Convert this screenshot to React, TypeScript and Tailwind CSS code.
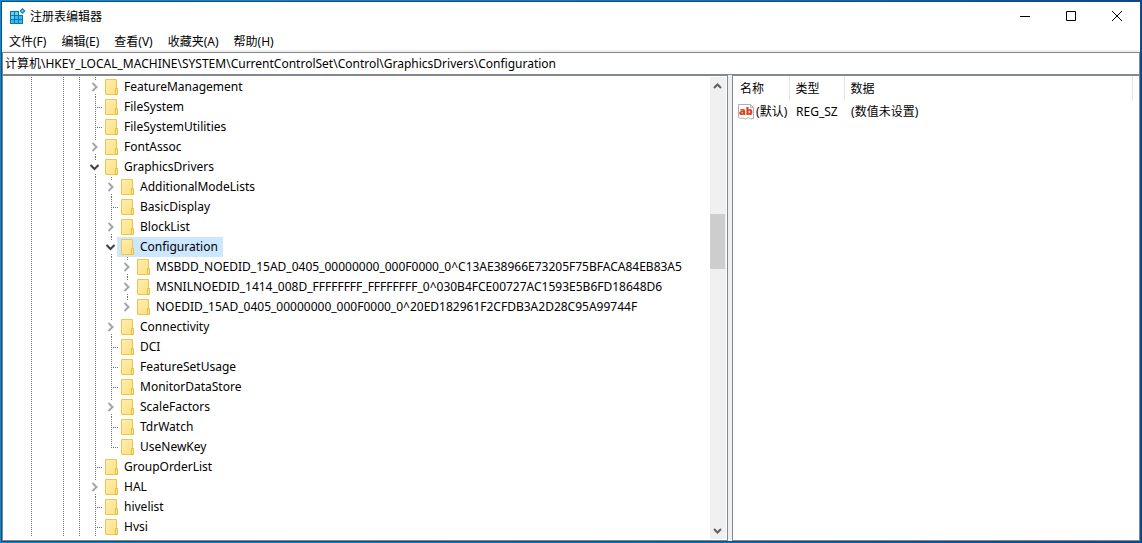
interface TreeKey {
  name: string;
  guides: boolean[];
  state: "leaf" | "closed" | "open";
  last?: boolean;
  selected?: boolean;
}

const BASE = [true, false, true, true];
const SUB = [...BASE, true];
const DEEP = [...SUB, true];

const keys: TreeKey[] = [
  { name: "FeatureManagement", guides: BASE, state: "closed" },
  { name: "FileSystem", guides: BASE, state: "leaf" },
  { name: "FileSystemUtilities", guides: BASE, state: "leaf" },
  { name: "FontAssoc", guides: BASE, state: "closed" },
  { name: "GraphicsDrivers", guides: BASE, state: "open" },
  { name: "AdditionalModeLists", guides: SUB, state: "closed" },
  { name: "BasicDisplay", guides: SUB, state: "leaf" },
  { name: "BlockList", guides: SUB, state: "closed" },
  { name: "Configuration", guides: SUB, state: "open", selected: true },
  { name: "MSBDD_NOEDID_15AD_0405_00000000_000F0000_0^C13AE38966E73205F75BFACA84EB83A5", guides: DEEP, state: "closed" },
  { name: "MSNILNOEDID_1414_008D_FFFFFFFF_FFFFFFFF_0^030B4FCE00727AC1593E5B6FD18648D6", guides: DEEP, state: "closed" },
  { name: "NOEDID_15AD_0405_00000000_000F0000_0^20ED182961F2CFDB3A2D28C95A99744F", guides: DEEP, state: "closed", last: true },
  { name: "Connectivity", guides: SUB, state: "closed" },
  { name: "DCI", guides: SUB, state: "leaf" },
  { name: "FeatureSetUsage", guides: SUB, state: "leaf" },
  { name: "MonitorDataStore", guides: SUB, state: "leaf" },
  { name: "ScaleFactors", guides: SUB, state: "closed" },
  { name: "TdrWatch", guides: SUB, state: "leaf" },
  { name: "UseNewKey", guides: SUB, state: "leaf", last: true },
  { name: "GroupOrderList", guides: BASE, state: "leaf" },
  { name: "HAL", guides: BASE, state: "closed" },
  { name: "hivelist", guides: BASE, state: "leaf" },
  { name: "Hvsi", guides: BASE, state: "leaf" },
];

const menus = ["文件(F)", "编辑(E)", "查看(V)", "收藏夹(A)", "帮助(H)"];

function RegeditIcon() {
  return (
    <svg width="16" height="16" viewBox="0 0 16 16" aria-hidden="true">
      <path d="M0 3h9v4h4v9H0z" fill="#0b76ad" />
      <path d="M1 4h3v3H1zM5 4h3v3H5zM1 8h3v3H1z" fill="#62d2fb" />
      <path d="M5 8h3v3H5zM9 8h3v3H9zM1 12h3v3H1zM5 12h3v3H5zM9 12h3v3H9z" fill="#35bdf2" />
      <path d="M12.500 0l3 3-3 3-3-3z" fill="#0b76ad" />
      <path d="M12.500 1.500L14 3l-1.500 1.500L11 3z" fill="#62d2fb" />
    </svg>
  );
}

function FolderIcon() {
  return (
    <svg width="13" height="16" viewBox="0 0 13 16" className="shrink-0" aria-hidden="true">
      <defs>
        <linearGradient id="folder" x1="0" y1="0" x2="1" y2="1">
          <stop offset="0" stopColor="#ffeeb0" />
          <stop offset="1" stopColor="#ffdf80" />
        </linearGradient>
      </defs>
      <path d="M.5.5h11v15H.5z" fill="url(#folder)" stroke="#ebc84c" />
      <path d="M10.500 9.500h2v6h-2z" fill="#ffe695" stroke="#e6bf40" />
    </svg>
  );
}

function StringIcon() {
  return (
    <svg width="16" height="16" viewBox="0 0 16 16" className="shrink-0" aria-hidden="true">
      <path d="M.5.5h12l3 3v11l-3 .5-2-1.500-3 1.500-3-1-2 .5-2-1z" fill="#fff" stroke="#b0b0b0" />
      <path d="M12.500.5v3h3" fill="none" stroke="#b0b0b0" />
      <text x="1" y="11" fontSize="11" fontWeight="800" fill="#d8431c" fontFamily="Open Sans, sans-serif">ab</text>
    </svg>
  );
}

function Chevron({ open }: { open: boolean }) {
  return (
    <svg width="11" height="10" viewBox="0 0 11 10" fill="none" strokeWidth="2" aria-hidden="true">
      {open ? (
        <path d="M1.500 3l4 4 4-4" stroke="#404040" />
      ) : (
        <path d="M3.500 1l4 4-4 4" stroke="#a6a6a6" />
      )}
    </svg>
  );
}

function Guide() {
  return <span className="w-px h-full bg-[repeating-linear-gradient(to_bottom,#707070_0_1px,transparent_1px_2px)]" />;
}

function TreeRow({ item }: { item: TreeKey }) {
  return (
    <li className="flex h-5" role="treeitem" aria-selected={!!item.selected}>
      {item.guides.map((line, i) => (
        <span key={i} className="w-4 shrink-0 flex justify-center pr-px">
          {line && <Guide />}
        </span>
      ))}
      {item.state === "leaf" ? (
        <span className="w-[13px] shrink-0 flex pl-[7px]">
          <span className={item.last ? "h-[11px] flex" : "h-5 flex"}>
            <Guide />
          </span>
          <span className="mt-2.5 h-px w-1.5 shrink-0 bg-[repeating-linear-gradient(to_right,transparent_0_1px,#707070_1px_2px)]" />
        </span>
      ) : (
        <span className="w-[13px] shrink-0 flex flex-col items-center">
          <span className="h-[3px] flex ml-[2px]"><Guide /></span>
          <button className="h-3.5 flex items-center" aria-label={item.name}>
            <Chevron open={item.state === "open"} />
          </button>
          {!item.last && <span className="h-[3px] flex ml-[2px]"><Guide /></span>}
        </span>
      )}
      <span className={`flex items-center gap-1.5 pl-1 pr-[5px] whitespace-nowrap ${item.selected ? "bg-[#cce8ff]" : ""}`}>
        <FolderIcon />
        {item.name}
      </span>
    </li>
  );
}

function ScrollBar() {
  return (
    <div className="w-4 shrink-0 mr-px my-px bg-[#f0f0f0] flex flex-col items-center">
      <button className="h-[18px] pr-px flex items-center" aria-label="向上滚动">
        <svg width="9" height="8" viewBox="0 0 9 8" fill="none"><path d="M1 6l3.500-3.500L8 6" stroke="#606060" strokeWidth="2" /></svg>
      </button>
      <div className="flex-[119]" />
      <div className="h-[55px] w-[15px] self-start bg-[#cdcdcd]" />
      <div className="flex-[254]" />
      <button className="h-4 pr-px flex items-center" aria-label="向下滚动">
        <svg width="9" height="8" viewBox="0 0 9 8" fill="none"><path d="M1 2l3.500 3.500L8 2" stroke="#606060" strokeWidth="2" /></svg>
      </button>
    </div>
  );
}

export default function App() {
  return (
    <div className="min-h-screen bg-[linear-gradient(to_right,#0090d8,#0078d0_60%,#0045a0)] p-px text-[12px] leading-5 text-black font-['Noto_Sans','Noto_Sans_CJK_SC',sans-serif]">
      <div className="border border-[#1d4c70] bg-white flex flex-col">
        {/* Title bar */}
        <header className="flex items-center h-7 pl-2">
          <RegeditIcon />
          <h1 className="ml-1 pt-0.5 flex-1">注册表编辑器</h1>
          <button className="w-[46px] h-7 flex items-center justify-center" aria-label="最小化">
            <svg width="10" height="10" viewBox="0 0 10 10"><path d="M0 5.500h10" stroke="#000" /></svg>
          </button>
          <button className="w-[46px] h-7 flex items-center justify-center" aria-label="最大化">
            <svg width="10" height="10" viewBox="0 0 10 10"><path d="M.5.5h9v9h-9z" fill="none" stroke="#000" /></svg>
          </button>
          <button className="w-[46px] h-7 flex items-center justify-center" aria-label="关闭">
            <svg width="10" height="10" viewBox="0 0 10 10"><path d="M0 0l10 10M10 0L0 10" stroke="#000" /></svg>
          </button>
        </header>

        {/* Menu bar */}
        <nav className="flex items-end h-[22px] pl-[7px] gap-[15px] border-b-2 border-[#f0f0f0]">
          {menus.map((m) => (
            <button key={m} className="h-4 leading-4">{m}</button>
          ))}
        </nav>

        {/* Address bar */}
        <input
          className="h-[23px] px-0.5 pb-px border border-[#828790] outline-none bg-white"
          aria-label="地址"
          defaultValue={"计算机\\HKEY_LOCAL_MACHINE\\SYSTEM\\CurrentControlSet\\Control\\GraphicsDrivers\\Configuration"}
        />

        <main className="flex bg-[#f0f0f0]">
          {/* Key tree */}
          <section className="flex w-[63.8%] shrink-0 border border-[#828790] bg-white overflow-hidden">
            <ul className="flex-1 min-w-0 pt-px pb-[3px] pl-[21px]" role="tree" aria-label="注册表项">
              {keys.map((k) => (
                <TreeRow key={k.name} item={k} />
              ))}
            </ul>
            <ScrollBar />
          </section>

          {/* Values */}
          <section className="flex-1 ml-1 border border-[#828790] bg-white">
            <table className="w-full table-fixed text-left">
              <colgroup>
                <col className="w-14" />
                <col className="w-[55px]" />
                <col />
                <col className="w-[7px]" />
              </colgroup>
              <thead>
                <tr className="h-[25px]">
                  <th className="font-normal pl-[7px] border-r border-[#e5e5e5]">名称</th>
                  <th className="font-normal pl-1.5 border-r border-[#e5e5e5]">类型</th>
                  <th className="font-normal pl-1.5 border-r border-[#e5e5e5]">数据</th>
                  <th />
                </tr>
              </thead>
              <tbody>
                <tr className="h-[22px] whitespace-nowrap">
                  <td className="pl-[5px]">
                    <span className="flex items-center gap-0.5"><StringIcon />(默认)</span>
                  </td>
                  <td className="pl-[7px]">REG_SZ</td>
                  <td className="pl-[7px]">(数值未设置)</td>
                  <td />
                </tr>
              </tbody>
            </table>
          </section>
        </main>
      </div>
    </div>
  );
}
